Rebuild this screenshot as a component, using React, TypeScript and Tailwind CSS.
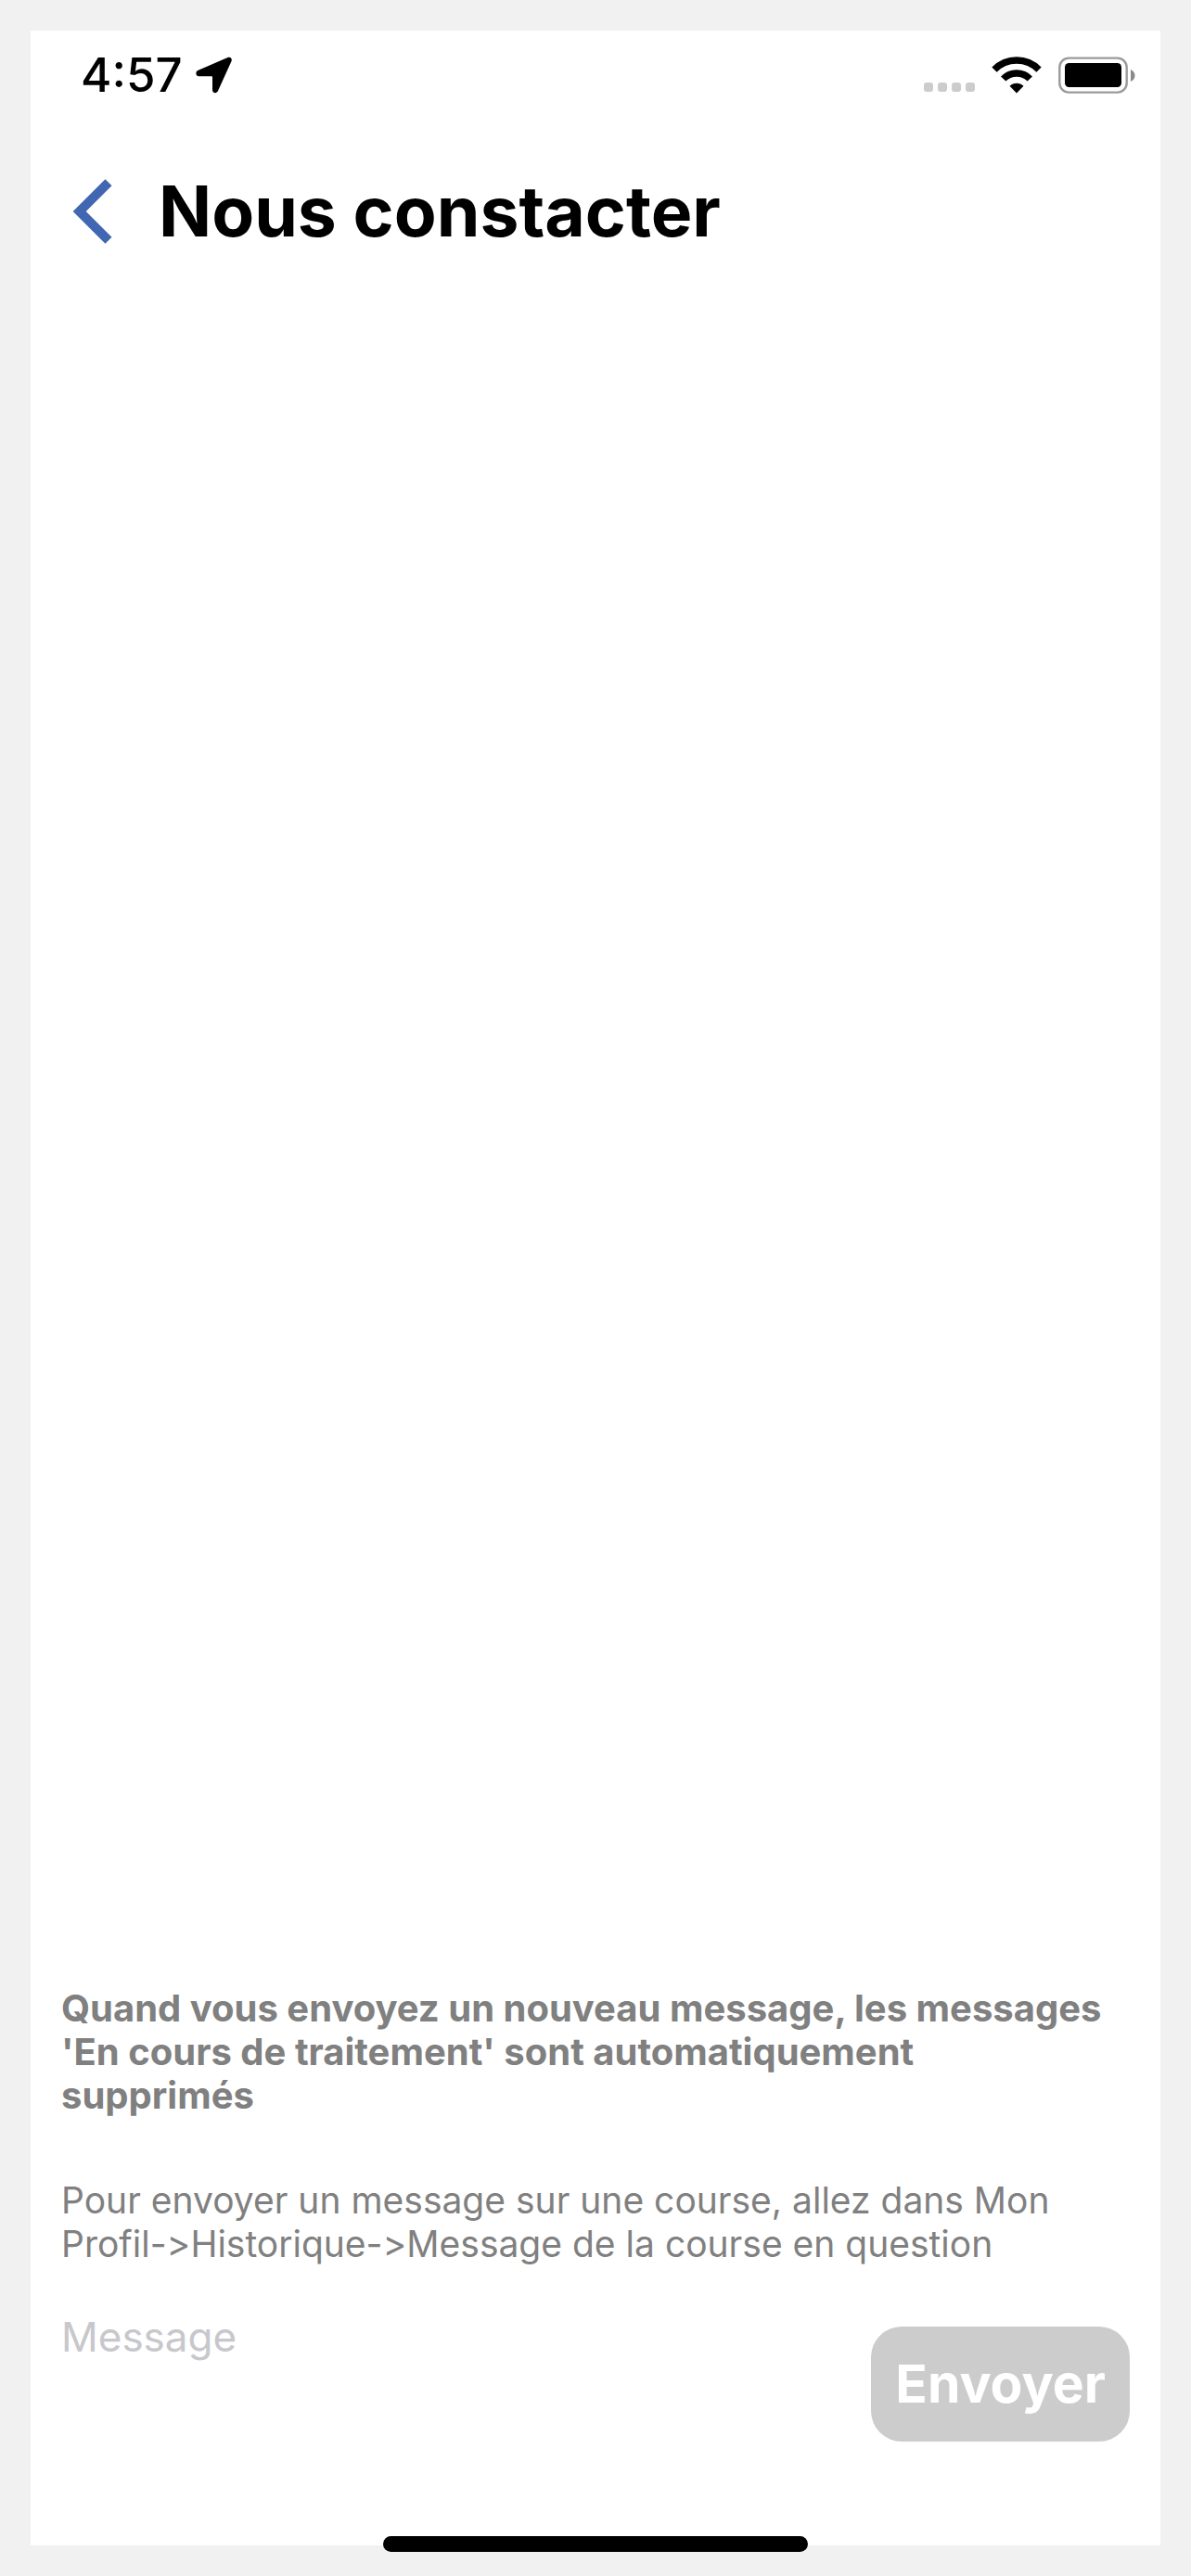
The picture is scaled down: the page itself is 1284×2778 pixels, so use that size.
import { useState } from "react";

function LocationIcon() {
  return (
    <svg viewBox="0 0 40 40" className="size-10" aria-hidden="true">
      <path
        d="M34.5 1 2.2 14.9C-.6 16.2-.1 21.3 3.2 21.3H17.2Q18 21.3 18 22V36C18 39.6 22.6 40.3 24 37L38.4 5.3C39.7 2.3 37.5-.2 34.5 1Z"
        fill="currentColor"
      />
    </svg>
  );
}

function WifiIcon() {
  return (
    <svg viewBox="0 0 54 40" className="h-10 w-[54px]" aria-hidden="true">
      <g fill="none" stroke="currentColor" strokeWidth="7.4">
        <path d="M3 14.2A33.5 33.5 0 0 1 51 14.2" />
        <path d="M12.7 24A20 20 0 0 1 41.3 24" />
      </g>
      <path d="M27 39.5 19.5 31.8A10.6 10.6 0 0 1 34.5 31.8Z" fill="currentColor" />
    </svg>
  );
}

function BatteryIcon() {
  return (
    <svg viewBox="0 0 84 40" className="h-10 w-[84px]" aria-hidden="true">
      <rect x="1.3" y="1.6" width="72.4" height="37" rx="10" fill="none" stroke="#9b9b9b" strokeWidth="2.4" />
      <rect x="7" y="7" width="61" height="26" rx="4.5" fill="currentColor" />
      <path d="M78 14C84 16.5 84 24.5 78 27Z" fill="#8a8a8a" />
    </svg>
  );
}

function StatusBar() {
  return (
    <div className="flex h-24 items-center justify-between pr-[26px] pl-[54px]">
      <div className="flex items-center gap-[14px]">
        <span className="text-[51px] leading-[60px] font-medium">4:57</span>
        <LocationIcon />
      </div>
      <div className="flex items-center gap-[18px]">
        <div className="flex h-9 items-end gap-[5px]">
          <span className="size-[10px] rounded-[3px] bg-[#cccccc]" />
          <span className="size-[10px] rounded-[3px] bg-[#cccccc]" />
          <span className="size-[10px] rounded-[3px] bg-[#cccccc]" />
          <span className="size-[10px] rounded-[3px] bg-[#cccccc]" />
        </div>
        <WifiIcon />
        <BatteryIcon />
      </div>
    </div>
  );
}

function Header() {
  return (
    <header className="flex items-center gap-[50px] px-[45px] pt-[52px]">
      <button type="button" aria-label="Retour" className="text-[#4267b2]">
        <svg viewBox="0 0 43 70" className="h-[70px] w-[43px]" aria-hidden="true">
          <path d="M39 3.7 7.7 35 39 66.3" fill="none" stroke="currentColor" strokeWidth="10" />
        </svg>
      </button>
      <h1 className="text-[75px] leading-[94px] font-bold">Nous constacter</h1>
    </header>
  );
}

export default function App() {
  const [message, setMessage] = useState("");

  return (
    <div className="flex min-h-screen flex-col bg-[#f1f1f1] p-[33px] font-[Inter,'Liberation_Sans',sans-serif] text-black">
      <div className="relative flex flex-1 flex-col bg-white">
        <StatusBar />
        <Header />

        <main className="flex-1" />

        <form
          className="px-[33px] pb-[112px]"
          onSubmit={(e) => e.preventDefault()}
        >
          <div className="flex flex-col gap-[66px] leading-[47px] text-[#808080] [font-variant-ligatures:none]">
            <p className="text-[40px] font-bold">
              Quand vous envoyez un nouveau message, les messages 'En cours de
              traitement' sont automatiquement
              <br />
              supprimés
            </p>
            <p className="text-[39px]">
              Pour envoyer un message sur une course, allez dans Mon
              Profil-&gt;Historique-&gt;Message de la course en question
            </p>
          </div>

          <div className="flex items-end gap-[33px] pt-[50px]">
            <textarea
              aria-label="Message"
              placeholder="Message"
              value={message}
              onChange={(e) => setMessage(e.target.value)}
              className="h-[140px] min-w-0 flex-1 resize-none text-[44px] leading-[54px] outline-none placeholder:text-[#c7c7cc]"
            />
            <button
              type="submit"
              disabled={!message}
              className="h-[124px] rounded-[33px] bg-[#cccccc] px-[26px] text-[57px] leading-[70px] font-bold text-white"
            >
              Envoyer
            </button>
          </div>
        </form>

        {/* Home indicator */}
        <div className="absolute -bottom-[7px] left-1/2 h-[17px] w-[458px] -translate-x-1/2 rounded-full bg-black" />
      </div>
    </div>
  );
}
